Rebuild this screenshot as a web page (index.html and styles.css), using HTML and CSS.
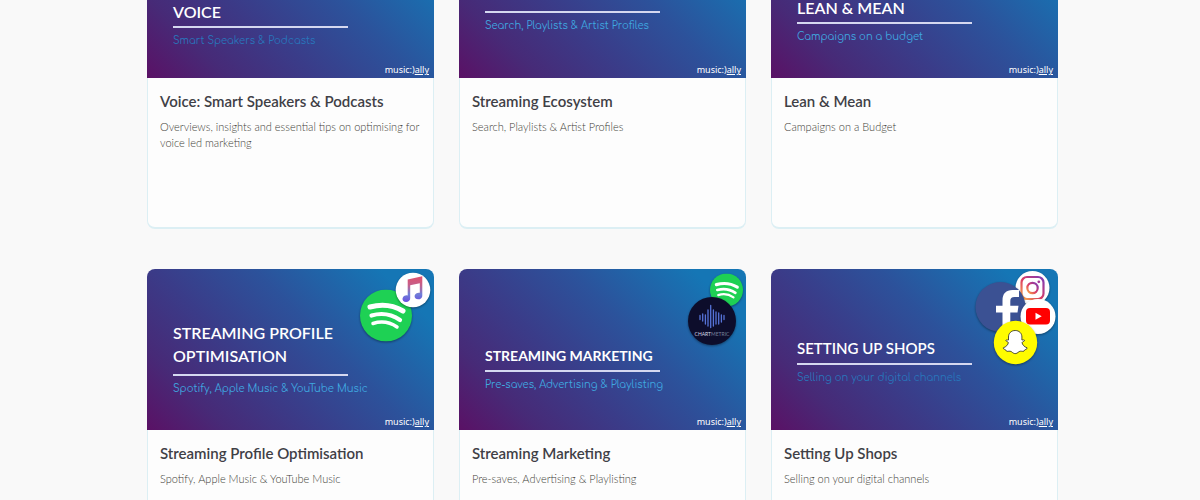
FILE: index.html
```html
<!DOCTYPE html>
<html lang="en">
<head>
    <meta charset="UTF-8">
    <meta name="viewport" content="width=device-width, initial-scale=1.0">
    <title>Music Ally Learning</title>
    <link rel="stylesheet" href="styles.css">
</head>
<body>
    <!-- shared icon shapes -->
    <svg class="defs" width="0" height="0" aria-hidden="true">
        <defs>
            <linearGradient id="note" x1="0" y1="0" x2="0" y2="1">
                <stop offset="0" stop-color="#e0506c"/>
                <stop offset=".35" stop-color="#c4608c"/>
                <stop offset=".7" stop-color="#6f7fd8"/>
                <stop offset="1" stop-color="#6a4ee0"/>
            </linearGradient>
            <linearGradient id="insta" x1="0" y1="1" x2="1" y2="0">
                <stop offset="0" stop-color="#f9b04b"/>
                <stop offset=".45" stop-color="#dd3d63"/>
                <stop offset="1" stop-color="#7b3bb8"/>
            </linearGradient>
            <symbol id="spotify" viewBox="-26 -26 52 52">
                <circle r="26" fill="#1ed154"/>
                <g fill="none" stroke="#fff" stroke-linecap="round">
                    <path d="M-16 -8.500Q2 -13.500 17 -4.500" stroke-width="5"/>
                    <path d="M-14.500 0Q1 -4.500 14 4.500" stroke-width="4.200"/>
                    <path d="M-13 8Q0 4 11 11.500" stroke-width="3.500"/>
                </g>
            </symbol>
        </defs>
    </svg>

    <main class="container">
        <div class="modules">
            <article class="card">
                <div class="banner low">
                    <p class="banner-title">VOICE</p>
                    <p class="banner-sub dim">Smart Speakers &amp; Podcasts</p>
                    <span class="brand">music:)<u>ally</u></span>
                </div>
                <div class="card-body">
                    <h2><a href="#">Voice: Smart Speakers &amp; Podcasts</a></h2>
                    <p>Overviews, insights and essential tips on optimising for voice led marketing</p>
                </div>
            </article>

            <article class="card">
                <div class="banner high">
                    <p class="banner-title"></p>
                    <p class="banner-sub">Search, Playlists &amp; Artist Profiles</p>
                    <span class="brand">music:)<u>ally</u></span>
                </div>
                <div class="card-body">
                    <h2><a href="#">Streaming Ecosystem</a></h2>
                    <p>Search, Playlists &amp; Artist Profiles</p>
                </div>
            </article>

            <article class="card">
                <div class="banner">
                    <p class="banner-title">LEAN &amp; MEAN</p>
                    <p class="banner-sub">Campaigns on a budget</p>
                    <span class="brand">music:)<u>ally</u></span>
                </div>
                <div class="card-body">
                    <h2><a href="#">Lean &amp; Mean</a></h2>
                    <p>Campaigns on a Budget</p>
                </div>
            </article>

            <article class="card">
                <div class="banner">
                    <p class="banner-title tall">STREAMING PROFILE<br>OPTIMISATION</p>
                    <p class="banner-sub">Spotify, Apple Music &amp; YouTube Music</p>
                    <span class="brand">music:)<u>ally</u></span>
                    <svg class="badges" viewBox="0 0 90 100" aria-hidden="true">
                        <use class="badge" href="#spotify" x="16" y="20.500" width="52" height="52"/>
                        <circle class="badge" cx="69" cy="21" r="17.300" fill="#fff"/>
                        <path d="M63.700 10.500L78.300 7.200V26.500A3.900 3.300 -15 1 1 75.800 23.800V14.200L66.200 16.300V29A3.900 3.300 -15 1 1 63.700 26.400Z" fill="url(#note)"/>
                    </svg>
                </div>
                <div class="card-body">
                    <h2><a href="#">Streaming Profile Optimisation</a></h2>
                    <p>Spotify, Apple Music &amp; YouTube Music</p>
                </div>
            </article>

            <article class="card">
                <div class="banner mid">
                    <p class="banner-title compact">STREAMING MARKETING</p>
                    <p class="banner-sub">Pre-saves, Advertising &amp; Playlisting</p>
                    <span class="brand">music:)<u>ally</u></span>
                    <svg class="badges" viewBox="0 0 90 100" aria-hidden="true">
                        <use class="badge" href="#spotify" x="54" y="4.500" width="33" height="33"/>
                        <circle class="badge" cx="56" cy="52" r="24" fill="#0d0d2b"/>
                        <path d="M44 46.500v4M46.700 45v7M49.400 46v9M52 41v16M54.700 36.500v22M57.400 41v16M60 43v12M62.700 44v11M65.400 46v7M68 46.500v4" stroke="#5673d8" stroke-width="1.300" stroke-linecap="round"/>
                        <text x="56" y="66.500" text-anchor="middle" class="chart-name">CHART<tspan fill="#77809c">METRIC</tspan></text>
                    </svg>
                </div>
                <div class="card-body">
                    <h2><a href="#">Streaming Marketing</a></h2>
                    <p>Pre-saves, Advertising &amp; Playlisting</p>
                </div>
            </article>

            <article class="card">
                <div class="banner high">
                    <p class="banner-title snug">SETTING UP SHOPS</p>
                    <p class="banner-sub dim">Selling on your digital channels</p>
                    <span class="brand">music:)<u>ally</u></span>
                    <svg class="badges" viewBox="0 0 90 100" aria-hidden="true">
                        <circle class="badge" cx="64.500" cy="19" r="17" fill="#fff"/>
                        <g fill="none" stroke="url(#insta)" stroke-width="2.200">
                            <rect x="53.500" y="8" width="22" height="22" rx="5.500"/>
                            <circle cx="64.500" cy="19" r="5.200"/>
                        </g>
                        <circle cx="70.800" cy="12.800" r="1.400" fill="#a53b98"/>
                        <circle class="badge" cx="32.500" cy="38" r="25" fill="#3b5193"/>
                        <path d="M34.500 63V43.500H28V36.700H34.500V31.500C34.500 24.500 38 21 44.500 21H51V28H46.500C43.500 28 42.300 29.200 42.300 32V36.700H50.500L49.500 43.500H42.300V63Z" fill="#fff"/>
                        <circle class="badge" cx="70" cy="47.500" r="17.500" fill="#fff"/>
                        <rect x="58" y="39" width="24" height="16.500" rx="4" fill="#f00"/>
                        <path d="M67.500 43.800V50.800L73.700 47.300Z" fill="#fff"/>
                        <circle class="badge" cx="47.500" cy="73.500" r="21.700" fill="#fffc00"/>
                        <path d="M47.200 61.500C43 61.500 40.500 64.500 40.500 68V71C39.500 71.200 38 70.300 37.900 71.500C38 72.600 40 72.500 40.300 73.600C40.300 75.500 38 78 35.300 78.800C34.500 80.300 38.300 80.300 38.700 82.300C40 82.600 41.700 81.700 43.300 82.600C45 84 46 84.600 47.200 84.600S49.500 84 51.100 82.600C52.700 81.700 54.400 82.600 55.700 82.300C56.100 80.300 59.900 80.300 59.100 78.800C56.400 78 54.100 75.500 54.100 73.600C54.400 72.500 56.400 72.600 56.500 71.500C56.400 70.300 54.900 71.200 53.900 71V68C53.900 64.500 51.400 61.500 47.200 61.500Z" fill="#fff" stroke="#222" stroke-width=".8" stroke-linejoin="round"/>
                    </svg>
                </div>
                <div class="card-body">
                    <h2><a href="#">Setting Up Shops</a></h2>
                    <p>Selling on your digital channels</p>
                </div>
            </article>
        </div>
    </main>
</body>
</html>
```
FILE: styles.css
```css
body {
    font-family: Lato, "Liberation Sans", sans-serif;
    margin: 0;
    background-color: #f9f9f9;
    color: #3f4046;
}

.defs {
    position: absolute;
}

.container {
    padding: 0 142px 0 147px;
    overflow: hidden;
}

/* the list is scrolled part of the way through its first row */
.modules {
    display: grid;
    grid-template-columns: repeat(3, 1fr);
    gap: 40px 25px;
    margin-top: -83px;
}

.card {
    display: flex;
    flex-direction: column;
    min-height: 312px;
}

.banner {
    position: relative;
    display: flex;
    flex-direction: column;
    justify-content: flex-end;
    box-sizing: border-box;
    height: 161px;
    padding: 0 0 34px 26px;
    border-radius: 8px 8px 0 0;
    background: linear-gradient(45deg, #5a1165 0%, #472a77 18%, #3a3c89 38%, #2c529b 60%, #1576b5 88%);
    color: #fff;
}

.banner.low {
    padding-bottom: 30px;
}

.banner.mid {
    padding-bottom: 38px;
}

.banner.high {
    padding-bottom: 45px;
}

.banner p {
    margin: 0;
}

.banner .banner-title {
    width: 175px;
    padding-bottom: 3px;
    border-bottom: 2px solid #d5d8f0;
    font-size: 16px;
    line-height: 23px;
    font-weight: 600;
    white-space: nowrap;
}

.banner .banner-title.tall {
    padding-bottom: 7px;
}

.banner .banner-title.compact {
    font-size: 14px;
    font-weight: bold;
}

.banner .banner-title.snug {
    font-size: 15px;
}

.banner-sub {
    padding-top: 5px;
    font-family: Comfortaa, Quicksand, Inter, sans-serif;
    font-size: 10px;
    line-height: 15px;
    color: #3fa9e0;
}

.banner-sub.dim {
    color: #2877bc;
}

.brand {
    position: absolute;
    right: 5px;
    bottom: 1px;
    font-family: "Noto Sans", sans-serif;
    font-size: 9px;
    line-height: 14px;
}

.badges {
    position: absolute;
    top: 0;
    right: 0;
    width: 90px;
    height: 100px;
}

.badge {
    filter: drop-shadow(0 1px 1px rgba(0, 0, 0, 0.4));
}

.chart-name {
    font-size: 5px;
    fill: #d5d8e8;
}

.card-body {
    flex: 1;
    padding: 13px 12px;
    border: 1px solid #dceff4;
    border-top: 0;
    border-bottom-width: 2px;
    border-radius: 0 0 8px 8px;
    background-color: #fdfdfd;
}

.card-body h2 {
    margin: 0 0 8px;
    font-size: 15px;
    line-height: 20px;
    font-weight: 600;
}

.card-body a {
    color: inherit;
    text-decoration: none;
}

.card-body p {
    margin: 0;
    font-size: 11px;
    line-height: 16px;
    font-weight: 300;
    color: #3f3d38;
}
```
